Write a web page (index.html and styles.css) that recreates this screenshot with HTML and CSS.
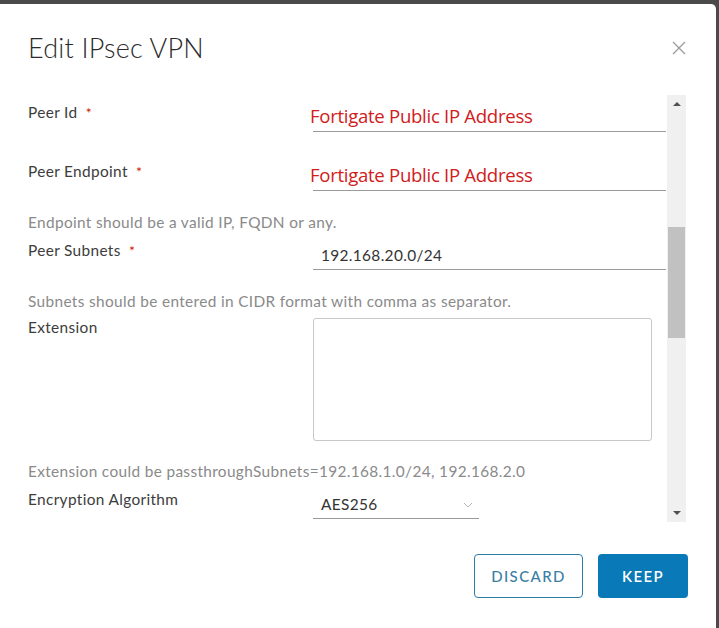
FILE: index.html
```html
<!DOCTYPE html>
<html lang="en">
<head>
<meta charset="utf-8">
<title>Edit IPsec VPN</title>
<link rel="stylesheet" href="styles.css">
</head>
<body>
<div class="dialog">
  <div class="header">
    <h1 class="title">Edit IPsec VPN</h1>
    <button class="close" aria-label="Close">
      <svg width="14" height="14" viewBox="0 0 14 14"><path d="M1 1L13 13M13 1L1 13" stroke="#9a9a9a" stroke-width="1.3" fill="none"/></svg>
    </button>
  </div>
  <div class="body">
    <div class="content">
      <div class="field">
        <div class="label">Peer Id <span class="req">*</span></div>
        <div class="control"><span class="annot">Fortigate Public IP Address</span></div>
      </div>
      <div class="field">
        <div class="label">Peer Endpoint <span class="req">*</span></div>
        <div class="control"><span class="annot">Fortigate Public IP Address</span></div>
      </div>
      <div class="helper">Endpoint should be a valid IP, FQDN or any.</div>
      <div class="field">
        <div class="label">Peer Subnets <span class="req">*</span></div>
        <div class="control"><span class="value">192.168.20.0/24</span></div>
      </div>
      <div class="helper">Subnets should be entered in CIDR format with comma as separator.</div>
      <div class="field ext">
        <div class="label">Extension</div>
        <div class="textarea-wrap"><div class="textarea"></div></div>
      </div>
      <div class="helper after-area">Extension could be passthroughSubnets=192.168.1.0/24, 192.168.2.0</div>
      <div class="field">
        <div class="label">Encryption Algorithm</div>
        <div class="select-wrap">
          <div class="control select"><span class="value">AES256</span>
            <svg class="chev" width="10" height="6" viewBox="0 0 10 6"><path d="M1 1L5 5L9 1" stroke="#b5b5b5" stroke-width="1" fill="none"/></svg>
          </div>
        </div>
      </div>
    </div>
    <div class="scrollbar">
      <div class="arrow up"></div>
      <div class="track"><div class="thumb"></div></div>
      <div class="arrow down"></div>
    </div>
  </div>
  <div class="footer">
    <button class="btn btn-outline">DISCARD</button>
    <button class="btn btn-primary">KEEP</button>
  </div>
</div>
</body>
</html>
```
FILE: styles.css
```css
* { box-sizing: border-box; }
html, body { margin: 0; padding: 0; }
body {
  background: #4a4a4a;
  width: 719px;
  height: 628px;
  overflow: hidden;
  font-family: Lato, "Open Sans", sans-serif;
}
.dialog {
  margin-top: 4px;
  width: 716px;
  height: 624px;
  background: #fff;
  border-top-right-radius: 5px;
  display: flex;
  flex-direction: column;
}
.header {
  height: 91px;
  display: flex;
  align-items: flex-start;
  justify-content: space-between;
  padding: 30px 30px 0 28px;
}
.title {
  margin: 0;
  font-weight: 300;
  font-size: 27px;
  line-height: 28px;
  color: #2b2b2b;
  letter-spacing: 0.2px;
}
.close {
  background: none;
  border: 0;
  padding: 0;
  margin-top: 7px;
  width: 14px;
  height: 14px;
  display: flex;
}
.body {
  height: 427px;
  display: flex;
}
.content {
  width: 667px;
  overflow: hidden;
  padding: 7px 0 0 28px;
}
.field {
  display: grid;
  grid-template-columns: 285px 353px;
  align-items: start;
}
.field + .field { margin-top: 29px; }
.helper + .field { margin-top: 8px; }
.helper + .field.ext { margin-top: 6px; }
.label {
  font-size: 15.4px;
  line-height: 20px;
  color: #3d3d3d;
  letter-spacing: 0.35px;
}
.req { color: #c92100; margin-left: 4px; font-size: 14px; }
.control {
  margin-top: 1px;
  height: 29px;
  border-bottom: 1px solid #9a9a9a;
  display: flex;
  align-items: center;
  padding-left: 8px;
}
.value {
  font-size: 15.4px;
  color: #333;
  letter-spacing: 0.35px;
}
.annot {
  font-family: "Open Sans", sans-serif;
  font-size: 18.6px;
  color: #d0201c;
  margin-left: -11px;
  margin-top: -4px;
  letter-spacing: -0.3px;
}
.helper {
  margin-top: 21px;
  font-size: 15.4px;
  line-height: 20px;
  color: #8a8a8a;
  letter-spacing: 0.35px;
}
.helper.after-area { margin-top: 20px; }
.textarea-wrap { padding-right: 14px; }
.textarea {
  margin-top: 1px;
  height: 123px;
  border: 1px solid #c8c8c8;
  border-radius: 3px;
}
.select-wrap { width: 166px; }
.select { justify-content: space-between; padding-right: 6px; }
.chev { margin-top: 1px; }
.scrollbar {
  width: 19px;
  background: #f0f0f0;
  display: flex;
  flex-direction: column;
  align-items: center;
}
.arrow {
  height: 18px;
  width: 100%;
  display: flex;
  align-items: center;
  justify-content: center;
}
.arrow::before {
  content: "";
  border-left: 4px solid transparent;
  border-right: 4px solid transparent;
}
.up::before { border-bottom: 4px solid #505050; }
.down::before { border-top: 4px solid #505050; }
.track { flex: 1; width: 100%; padding: 0 1px; }
.thumb {
  margin-top: 114px;
  height: 111px;
  background: #c1c1c1;
}
.footer {
  display: flex;
  justify-content: flex-end;
  gap: 15px;
  padding: 32px 28px 0 0;
}
.btn {
  height: 44px;
  border-radius: 4px;
  font-family: Lato, sans-serif;
  font-size: 15px;
  font-weight: 600;
  letter-spacing: 1.4px;
}
.btn-outline {
  width: 109px;
  background: #fff;
  border: 1px solid #2d7ea6;
  color: #3a7ea3;
  font-weight: 500;
}
.btn-primary {
  width: 90px;
  background: #0a79b8;
  border: 0;
  color: #fff;
}
```
